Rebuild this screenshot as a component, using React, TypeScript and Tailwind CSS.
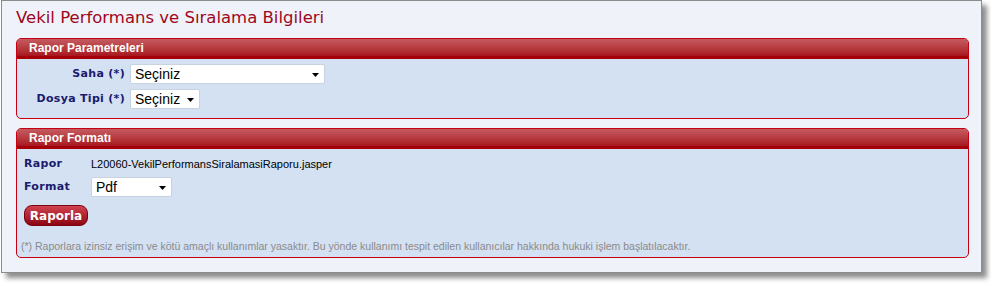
import React from "react";

const verdana = "font-['Verdana','DejaVu_Sans',sans-serif]";
const arial = "font-['Arial','Liberation_Sans',sans-serif]";

const Arrow = () => (
  <svg width="7" height="4" viewBox="0 0 7 4" className="pointer-events-none absolute right-[5px] top-[8px]">
    <path d="M0 0h7L3.5 4z" fill="#000" />
  </svg>
);

const FakeSelect: React.FC<{ value: string; width: string }> = ({ value, width }) => (
  <div className={`relative h-[20px] ${width} rounded-[2px] border border-[#c9d3e0] bg-white pl-[4px] text-[14px] leading-[18px] text-black ${arial}`}>
    {value}
    <Arrow />
  </div>
);

const Panel: React.FC<{ title: string; className?: string; children: React.ReactNode }> = ({ title, className, children }) => (
  <div className={`rounded-[5px] border border-[#c40012] bg-[#d4e1f2] ${className || ""}`}>
    <div className={`h-[20px] rounded-t-[4px] border-b-[3px] border-[#a50008] bg-gradient-to-b from-[#c55a61] to-[#a8141f] pl-[12px] text-[12px] font-bold leading-[18px] text-white ${arial}`}>
      {title}
    </div>
    {children}
  </div>
);

export default function App() {
  return (
    <div className="h-[284px] w-[991px] bg-white">
      <div className="ml-[1px] h-[273px] w-[981px] border border-[#8c8c8c] bg-[#eff3f9] pl-[14px] pr-[12px] pt-[5px] shadow-[5px_5px_5px_rgba(0,0,0,0.45)]">
        <h1 className={`h-[32px] text-[16.5px] leading-[24px] text-[#a0061c] ${verdana}`}>
          Vekil Performans ve Sıralama Bilgileri
        </h1>

        <Panel title="Rapor Parametreleri" className="h-[81px]">
          <div className="flex flex-col gap-[5px] pt-[5px]">
            <div className="flex items-center">
              <div className={`w-[113px] pr-[5px] text-right text-[11px] font-bold tracking-[0.3px] text-[#1a1a6e] ${verdana}`}>Saha (*)</div>
              <FakeSelect value="Seçiniz" width="w-[195px]" />
            </div>
            <div className="flex items-center">
              <div className={`w-[113px] pr-[5px] text-right text-[11px] font-bold tracking-[0.3px] text-[#1a1a6e] ${verdana}`}>Dosya Tipi (*)</div>
              <FakeSelect value="Seçiniz" width="w-[70px]" />
            </div>
          </div>
        </Panel>

        <Panel title="Rapor Formatı" className="mt-[9px] h-[130px]">
          <div className="flex flex-col pl-[7px] pt-[6px]">
            <div className="flex h-[18px] items-center">
              <div className={`w-[67px] text-[11px] font-bold tracking-[0.3px] text-[#1a1a6e] ${verdana}`}>Rapor</div>
              <div className={`text-[11px] text-black ${arial}`}>L20060-VekilPerformansSiralamasiRaporu.jasper</div>
            </div>
            <div className="mt-[4px] flex items-center">
              <div className={`w-[67px] text-[11px] font-bold tracking-[0.3px] text-[#1a1a6e] ${verdana}`}>Format</div>
              <FakeSelect value="Pdf" width="w-[81px]" />
            </div>
            <button
              type="button"
              className={`mt-[8px] h-[21px] w-[64px] rounded-[8px] border border-[#7a0010] bg-gradient-to-b from-[#d2414f] to-[#8e0012] text-[12px] font-bold leading-[18px] text-white ${verdana}`}
            >
              Raporla
            </button>
            <div className={`mt-[13px] -ml-[3px] text-[10.5px] text-[#8a8a8a] ${arial}`}>
              (*) Raporlara izinsiz erişim ve kötü amaçlı kullanımlar yasaktır. Bu yönde kullanımı tespit edilen kullanıcılar hakkında hukuki işlem başlatılacaktır.
            </div>
          </div>
        </Panel>
      </div>
    </div>
  );
}
